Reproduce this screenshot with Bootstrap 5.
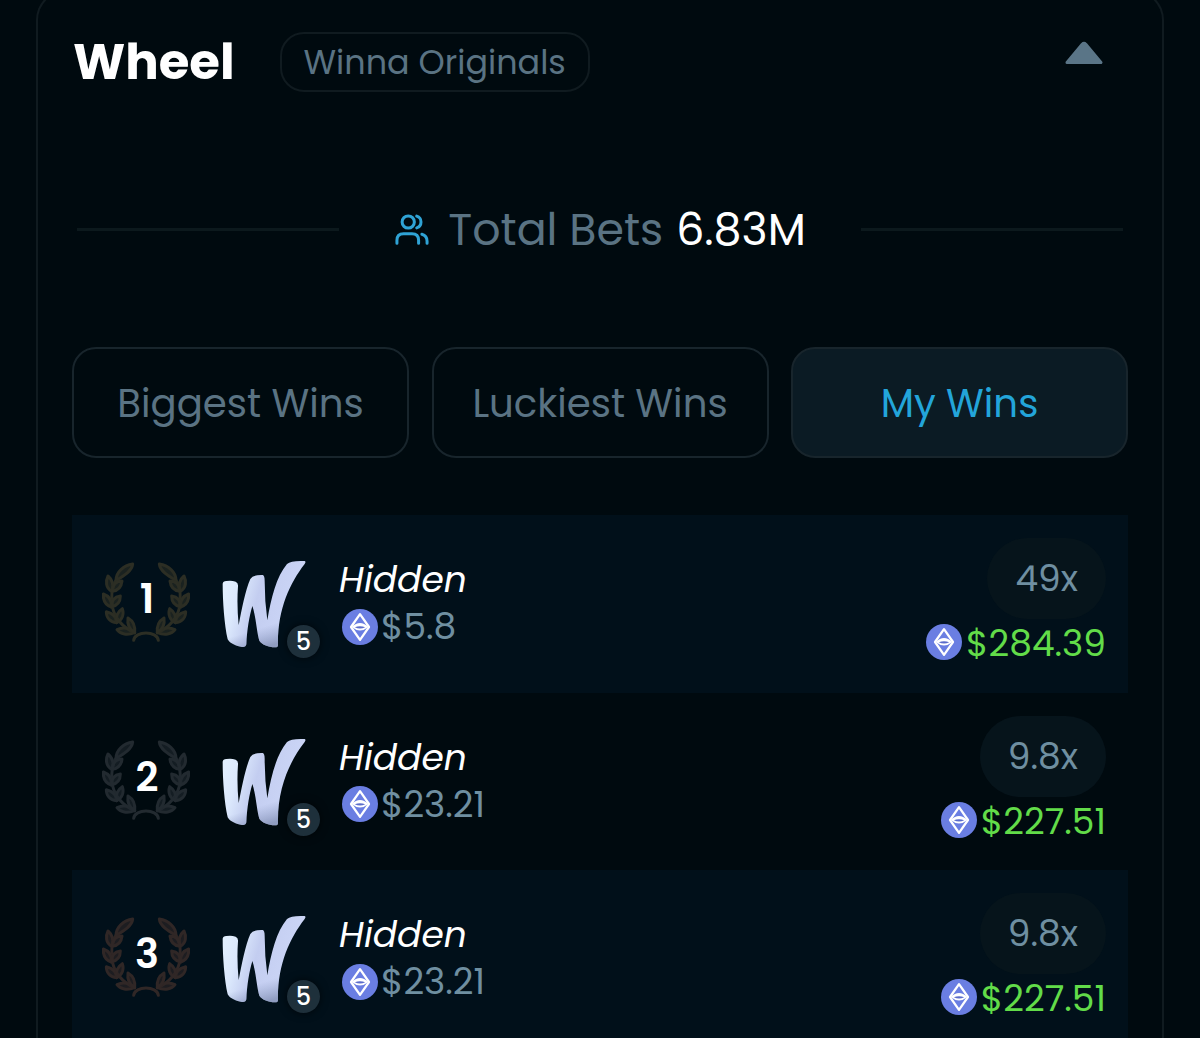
<!DOCTYPE html>
<html lang="en" data-bs-theme="dark">
<head>
<meta charset="utf-8">
<meta name="viewport" content="width=device-width, initial-scale=1">
<title>Wheel</title>
<link href="https://cdn.jsdelivr.net/npm/bootstrap@5.3.0/dist/css/bootstrap.min.css" rel="stylesheet">
<style>
body{background:#000a0f;font-family:Poppins,Inter,"Liberation Sans",sans-serif;font-feature-settings:"cv11";color:#fff;height:1038px;overflow:hidden}
svg{display:block;flex:none}
.panel{margin:-10px 36px 0;border:2px solid #101b20;border-bottom:0;border-radius:30px 30px 0 0;height:1048px;overflow:hidden;padding:0 34px;background:transparent}
.panel-head{height:124px;padding-top:16px}
.game-title{font-size:49.7px;font-weight:700;line-height:60px;margin:0 45px 0 1px}
.tag{width:310px;height:60px;border:2px solid #101b20;border-radius:24px;color:#5a7383;font-size:33.4px;line-height:57px;text-align:center;white-space:nowrap}
.caret{margin:-18px 24px 0 auto}
.totals{height:60px;margin-top:83px;font-size:44.3px;line-height:60px;padding:0 5px}
.totals .line{width:262px;height:3px;background:#0c191d}
.totals .lbl{color:#5a7383;margin-left:19px}
.totals .num{margin-left:13px}
.totals .sum{padding:2px 0 0 1px}
.tabs{margin-top:88px;gap:22.5px}
.tab{flex:1 1 0;height:111px;border:2px solid #18252c;border-radius:24px;background:transparent;color:#5a7383;font-size:38.7px;line-height:109px;text-align:center;padding:0;white-space:nowrap}
.tab.on{background:#0b1b24;color:#23a5da}
.wins{margin-top:57px}
.win{height:177.5px;padding:0 22px 0 30px}
.win:nth-child(odd){background:#01101a}
.rank{width:88px;height:80px;margin-top:47px;position:relative}
.rank b{position:absolute;inset:-2px 0 0 2px;text-align:center;font-size:40px;font-weight:600;line-height:78px}
.r1{color:#2c2e24}.r2{color:#222a30}.r3{color:#302726}
.avatar{width:84px;margin:45px 0 0 32px;position:relative}
.lvl{position:absolute;left:65px;top:65px;width:33px;height:33px;border-radius:50%;background:#1e303b;font-size:24px;font-weight:500;line-height:33px;text-align:center;box-shadow:0 0 8px #000a}
.who{margin:44px 0 0 33px}
.name{font-size:36px;font-style:italic;line-height:42px}
.amt{color:#6f8fa1;font-size:36px;line-height:38px;gap:4px;white-space:nowrap}
.who .amt{margin:6px 0 0 3px}
.who .amt svg{margin-right:-1px}
.who .amt span{padding-top:1px}
.gain{margin:23px 0 0 auto}
.mult{height:81px;padding:0 28px;border-radius:41px;background:#06141b;color:#6f8fa1;font-size:36px;line-height:81px;text-align:center}
.gain .amt{color:#62dc49;margin-top:2px}
.gain .amt span{padding-top:4px}
</style>
<script src="https://cdn.jsdelivr.net/npm/bootstrap@5.3.0/dist/js/bootstrap.bundle.min.js"></script>
</head>
<body>
<svg width="0" height="0" class="position-absolute" aria-hidden="true">
<defs>
<linearGradient id="silver" x1="0" y1="0" x2="1" y2=".3"><stop offset="0" stop-color="#e6f3ff"/><stop offset=".28" stop-color="#dbe8fc"/><stop offset=".5" stop-color="#c3cdf0"/><stop offset="1" stop-color="#ccd6f7"/></linearGradient>
<linearGradient id="shade" x1=".2" y1="0" x2=".5" y2="1"><stop offset=".78" stop-color="#8695bd" stop-opacity="0"/><stop offset="1" stop-color="#7886ab" stop-opacity=".7"/></linearGradient>
<g id="branch" stroke="currentColor" stroke-width="9" stroke-linejoin="round" stroke-linecap="round" fill="currentColor" fill-opacity=".6">
<path fill="none" d="M42 55C28 78 27 110 32 138C38 165 60 196 98 212"/>
<path d="M42 55C42 30 65 10 92 6C90 26 68 40 42 55Z"/>
<path d="M30 88C10 78 11 56 18 42C32 54 36 70 30 88Z"/><path d="M30 88C32 66 44 57 60 57C58 76 48 86 30 88Z"/>
<path d="M28 135C9 128 3 112 4 96C20 102 30 116 28 135Z"/><path d="M28 135C28 114 40 104 55 102C55 120 46 131 28 135Z"/>
<path d="M44 182C24 180 13 167 13 149C30 153 43 164 44 182Z"/><path d="M44 182C40 162 48 148 61 140C67 158 60 174 44 182Z"/>
<path d="M98 212C76 221 55 217 45 203C63 194 82 198 98 212Z"/><path d="M98 212C82 202 75 188 78 168C92 176 100 192 98 212Z"/>
</g>
<symbol id="laurel" viewBox="0 0 264 240"><use href="#branch"/><use href="#branch" transform="translate(264 0) scale(-1 1)"/><path d="M95 235C98 206 166 206 169 235" fill="none" stroke="currentColor" stroke-width="9" stroke-linecap="round"/></symbol>
<path id="wshape" d="M399 116Q400 108 410 108Q425 105 438 110Q446 113 445 124Q441 180 447 240C456 195 467 135 482 102Q490 89 519 90Q525 92 525 108Q525 170 533 226C544 160 560 95 592 57Q604 46 645 48Q650 50 645 57C600 115 563 195 565 300Q565 308 555 307C538 306 517 300 509 287C501 260 499 215 488 183C479 213 472 255 470 298Q468 308 457 306C440 303 421 296 414 283C404 240 399 170 399 116Z"/>
<symbol id="wlogo" viewBox="397 46 252 262"><use href="#wshape" fill="url(#silver)"/><use href="#wshape" fill="url(#shade)"/></symbol>
<symbol id="eth" viewBox="0 0 104 104"><circle cx="52" cy="52" r="52" fill="#6a7ee2"/><path d="M52 15L78 52L52 89L26 52Z" fill="none" stroke="#fff" stroke-width="6.5" stroke-linejoin="round"/><path d="M28 52Q52 29 76 52Q52 72 28 52Z" fill="#fff"/><path d="M37 53Q52 46 67 53Q52 60 37 53Z" fill="#5a6ccb"/></symbol>
</defs></svg>
<main class="panel">
<header class="panel-head d-flex align-items-center">
<h1 class="game-title">Wheel</h1><span class="tag">Winna Originals</span>
<svg class="caret" width="40" height="24" viewBox="0 0 40 24"><path d="M3 21.5L18.2 3.2Q20 1.4 21.8 3.2L37 21.5Z" fill="#5a7587" stroke="#5a7587" stroke-width="3" stroke-linejoin="round"/></svg>
</header>
<section class="totals d-flex align-items-center justify-content-between">
<span class="line"></span>
<div class="sum d-flex align-items-center"><svg width="34" height="32" viewBox="0 0 36 34" fill="none" stroke="#2fa3d5" stroke-width="3.2" stroke-linecap="round"><circle cx="14" cy="8.5" r="6.5"/><path d="M2 31V28Q2 21 9 21H18Q25 21 25 28V31M23 2.3A6.5 6.5 0 0 1 23 14.7M28.5 21.5Q34 23 34 29V31"/></svg>
<span class="lbl">Total Bets</span><span class="num">6.83M</span></div>
<span class="line"></span>
</section>
<nav class="tabs d-flex"><button class="tab">Biggest Wins</button><button class="tab">Luckiest Wins</button><button class="tab on">My Wins</button></nav>
<section class="wins">
<article class="win d-flex align-items-start"><div class="rank r1"><svg width="88" height="80"><use href="#laurel"/></svg><b class="text-white">1</b></div><div class="avatar"><svg width="84" height="88"><use href="#wlogo"/></svg><span class="lvl">5</span></div><div class="who"><div class="name">Hidden</div><div class="amt d-flex align-items-center"><svg width="36" height="36"><use href="#eth"/></svg><span>$5.8</span></div></div><div class="gain d-flex flex-column align-items-end"><div class="mult">49x</div><div class="amt d-flex align-items-center"><svg width="36" height="36"><use href="#eth"/></svg><span>$284.39</span></div></div></article>
<article class="win d-flex align-items-start"><div class="rank r2"><svg width="88" height="80"><use href="#laurel"/></svg><b class="text-white">2</b></div><div class="avatar"><svg width="84" height="88"><use href="#wlogo"/></svg><span class="lvl">5</span></div><div class="who"><div class="name">Hidden</div><div class="amt d-flex align-items-center"><svg width="36" height="36"><use href="#eth"/></svg><span>$23.21</span></div></div><div class="gain d-flex flex-column align-items-end"><div class="mult">9.8x</div><div class="amt d-flex align-items-center"><svg width="36" height="36"><use href="#eth"/></svg><span>$227.51</span></div></div></article>
<article class="win d-flex align-items-start"><div class="rank r3"><svg width="88" height="80"><use href="#laurel"/></svg><b class="text-white">3</b></div><div class="avatar"><svg width="84" height="88"><use href="#wlogo"/></svg><span class="lvl">5</span></div><div class="who"><div class="name">Hidden</div><div class="amt d-flex align-items-center"><svg width="36" height="36"><use href="#eth"/></svg><span>$23.21</span></div></div><div class="gain d-flex flex-column align-items-end"><div class="mult">9.8x</div><div class="amt d-flex align-items-center"><svg width="36" height="36"><use href="#eth"/></svg><span>$227.51</span></div></div></article>
</section>
</main>
</body>
</html>
